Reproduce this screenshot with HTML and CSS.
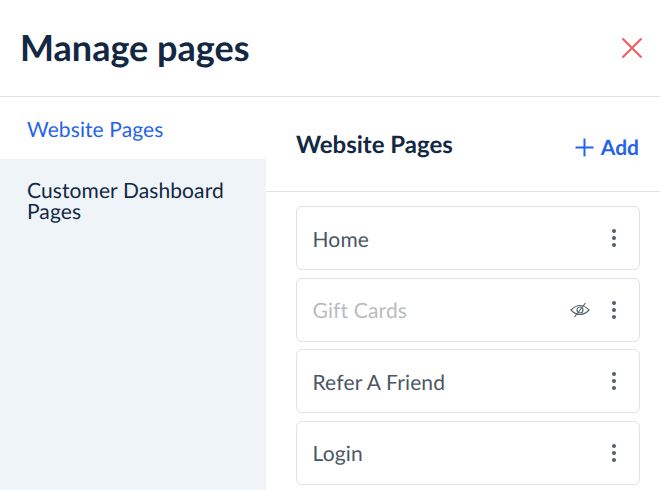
FILE: index.html
```html
<!DOCTYPE html>
<html lang="en">
<head>
    <meta charset="UTF-8">
    <meta name="viewport" content="width=device-width, initial-scale=1.0">
    <title>Manage pages</title>
    <link rel="stylesheet" href="styles.css">
</head>
<body>

    <header class="top">
        <h1>Manage pages</h1>
        <button class="close" aria-label="Close">
            <svg width="22" height="22" viewBox="0 0 22 22"><path d="M1.5 1.5l19 19M20.5 1.5l-19 19"/></svg>
        </button>
    </header>

    <div class="panes">
        <nav class="side">
            <a class="side-item active">Website Pages</a>
            <a class="side-item">Customer Dashboard Pages</a>
        </nav>

        <main class="content">
            <div class="content-head">
                <h2>Website Pages</h2>
                <a class="add">
                    <svg width="19" height="19" viewBox="0 0 19 19"><path d="M9.5 0.5v18M0.5 9.5h18"/></svg>
                    Add
                </a>
            </div>

            <ul class="pages">
                <li class="page">
                    <span class="page-name">Home</span>
                    <span class="dots"><i></i><i></i><i></i></span>
                </li>
                <li class="page hidden-page">
                    <span class="page-name">Gift Cards</span>
                    <svg class="eye" width="20" height="16" viewBox="0 0 20 16"><path d="M1 8c2.800-3 5.800-4.500 9-4.500s6.200 1.500 9 4.500c-2.800 3-5.800 4.500-9 4.500s-6.200-1.500-9-4.500z"/><circle cx="10" cy="8" r="3"/><path d="M15.500 1L4.500 15"/></svg>
                    <span class="dots"><i></i><i></i><i></i></span>
                </li>
                <li class="page">
                    <span class="page-name">Refer A Friend</span>
                    <span class="dots"><i></i><i></i><i></i></span>
                </li>
                <li class="page">
                    <span class="page-name">Login</span>
                    <span class="dots"><i></i><i></i><i></i></span>
                </li>
            </ul>
        </main>
    </div>

</body>
</html>
```

FILE: styles.css
```css
html, body {
    height: 100%;
}
body {
    margin: 0;
    height: 490px;
    overflow: hidden;
    display: flex;
    flex-direction: column;
    font-family: Lato, "Open Sans", sans-serif;
    color: #122843;
    background: #fff;
    text-rendering: geometricPrecision;
}
.top {
    height: 96px;
    flex: none;
    box-sizing: content-box;
    display: flex;
    align-items: center;
    justify-content: space-between;
    padding: 0 17px 0 20px;
    border-bottom: 1px solid #e0e2e8;
}
h1 {
    margin: 0 0 2px;
    font-size: 36px;
    font-weight: 700;
}
.close {
    display: flex;
    padding: 0;
    border: none;
    background: none;
}
.close path {
    fill: none;
    stroke: #ee5a5a;
    stroke-width: 2;
}
.panes {
    flex: 1;
    display: flex;
    min-height: 0;
}
.side {
    width: 266px;
    flex: none;
    display: flex;
    flex-direction: column;
}
.side-item {
    font-size: 21px;
    line-height: 21px;
    letter-spacing: 0.1px;
}
.side-item.active {
    height: 62px;
    box-sizing: border-box;
    padding: 22px 27px 0;
    color: #2563eb;
}
.side-item:not(.active) {
    flex: 1;
    padding: 21px 27px 0;
    background: #eff4f8;
}
.content {
    flex: 1;
    min-width: 0;
}
.content-head {
    height: 95px;
    box-sizing: border-box;
    display: flex;
    justify-content: space-between;
    align-items: center;
    padding: 0 21px 0 30px;
    border-bottom: 1px solid #e0e2e8;
}
h2 {
    margin: 0;
    font-size: 24px;
    font-weight: 700;
}
.add {
    display: flex;
    align-items: center;
    gap: 7px;
    margin: 6px 0 0;
    font-size: 21px;
    font-weight: 700;
    color: #2563eb;
}
.add path {
    fill: none;
    stroke: #2563eb;
    stroke-width: 2;
}
.pages {
    list-style: none;
    margin: 0;
    padding: 14px 20px 0 30px;
    display: flex;
    flex-direction: column;
    gap: 7.5px;
}
.page {
    height: 64px;
    box-sizing: border-box;
    display: flex;
    align-items: center;
    gap: 14px;
    padding: 0 23px 0 15.500px;
    border: 1px solid #e0e2e8;
    border-radius: 6px;
    font-size: 21px;
    color: #4b5663;
}
.page-name {
    flex: 1;
    padding-top: 2px;
    letter-spacing: 0.15px;
}
.hidden-page .page-name {
    color: #b9bcc2;
}
.eye {
    margin-right: 8px;
    fill: none;
    stroke: #5c6670;
    stroke-width: 1.200;
}
.dots {
    display: flex;
    flex-direction: column;
    gap: 3px;
}
.dots i {
    width: 4px;
    height: 4px;
    border-radius: 50%;
    background: #4f5f6f;
}
```
